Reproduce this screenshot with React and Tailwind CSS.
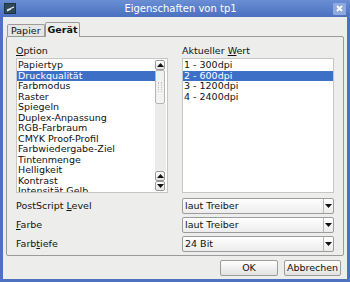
import React from 'react';

const options = [
  'Papiertyp',
  'Druckqualität',
  'Farbmodus',
  'Raster',
  'Spiegeln',
  'Duplex-Anpassung',
  'RGB-Farbraum',
  'CMYK Proof-Profil',
  'Farbwiedergabe-Ziel',
  'Tintenmenge',
  'Helligkeit',
  'Kontrast',
  'Intensität Gelb',
];

const values = ['1 - 300dpi', '2 - 600dpi', '3 - 1200dpi', '4 - 2400dpi'];

function Arrow({ up }) {
  return (
    <svg width="7" height="4" viewBox="0 0 7 4">
      <path d={up ? 'M0 4 L3.5 0 L7 4 Z' : 'M0 0 L3.5 4 L7 0 Z'} fill="#111" />
    </svg>
  );
}

function ScrollBtn({ up }) {
  return (
    <div className="h-[10px] w-[10px] flex items-center justify-center border border-[#9a9a9a] rounded-[2px] bg-gradient-to-b from-white to-[#e4e4e4]">
      <Arrow up={up} />
    </div>
  );
}

function Row({ text, selected }) {
  return (
    <div
      className={`h-[10.5px] leading-[10.5px] pl-[1px] whitespace-nowrap ${
        selected ? 'bg-[#3d6fc7] text-white' : 'text-[#111]'
      }`}
    >
      {text}
    </div>
  );
}

function Select({ value }) {
  return (
    <div className="h-[16px] w-[152px] flex border border-[#9c9c9c] rounded-[2px] bg-gradient-to-b from-white to-[#ececec]">
      <div className="flex-1 pl-[2px] leading-[14px] text-[#111]">{value}</div>
      <div className="w-[10px] border-l border-[#b8b8b8] flex items-center justify-center">
        <Arrow />
      </div>
    </div>
  );
}

function Label({ children }) {
  return <div className="h-[16px] leading-[16px] text-[#111]">{children}</div>;
}

export default function App() {
  return (
    <div
      className="w-[350px] h-[282px] bg-[#4c72c0] flex flex-col text-[9.5px] overflow-hidden"
      style={{ fontFamily: '"DejaVu Sans", sans-serif' }}
    >
      {/* title bar */}
      <div className="h-[17px] flex items-center bg-gradient-to-b from-[#6a8ed4] to-[#4a70bf] relative">
        <div className="ml-[4px] w-[12px] h-[11px] bg-[#2e4a5a] border border-[#1e3340] flex items-center justify-center">
          <svg width="9" height="6" viewBox="0 0 9 6">
            <path d="M1 4 L8 1 M1 5 L5 3" stroke="#e8eef2" strokeWidth="1.2" />
          </svg>
        </div>
        <div className="flex-1 text-center text-white text-[10px] pl-[12px]">Eigenschaften von tp1</div>
        <div className="mr-[4px] w-[13px] h-[12px] bg-[#8ea9de] rounded-[1px] flex items-center justify-center">
          <svg width="7" height="7" viewBox="0 0 7 7">
            <path d="M1 1 L6 6 M6 1 L1 6" stroke="white" strokeWidth="1.8" />
          </svg>
        </div>
      </div>

      {/* body */}
      <div className="flex-1 mx-[3px] mb-[3px] bg-[#ededeb] flex flex-col">
        <div className="flex items-end h-[19px] pl-[4px] pt-[5px]">
          <div className="h-[12px] px-[3px] border border-b-0 border-[#9b9b9b] rounded-t-[2px] bg-[#e6e6e4] leading-[11px] text-[#111]">
            Papier
          </div>
          <div className="h-[15px] px-[2px] border border-b-0 border-[#9b9b9b] rounded-t-[2px] bg-[#ededeb] leading-[14px] font-bold text-[#111] -mb-[1px] relative">
            Gerät
          </div>
        </div>

        <div className="mx-[3px] h-[220px] border border-[#9b9b9b] rounded-[2px] px-[9px] pt-[8px]">
          <div className="flex gap-[14px]">
            <div className="w-[152px]">
              <div className="h-[13px] leading-[12px] text-[#111]">
                <span className="underline">O</span>ption
              </div>
              <div className="h-[135px] bg-white border border-[#c6c6c6] flex">
                <div className="flex-1 overflow-hidden pt-[1px]">
                  {options.map((o, i) => (
                    <Row key={o} text={o} selected={i === 1} />
                  ))}
                </div>
                <div className="w-[12px] py-[1px] pr-[1px] flex flex-col">
                  <ScrollBtn up />
                  <div className="h-[34px] w-[10px] border border-[#b5b5b5] rounded-[2px] bg-[#f2f2f2] flex items-center justify-center">
                    <div className="w-[4px] h-[10px] border-l border-r border-dotted border-[#c0c0c0]" />
                  </div>
                  <div className="flex-1 bg-[#ebebeb]" />
                  <ScrollBtn up />
                  <ScrollBtn />
                </div>
              </div>
            </div>
            <div className="w-[152px]">
              <div className="h-[13px] leading-[12px] text-[#111]">
                Aktueller <span className="underline">W</span>ert
              </div>
              <div className="h-[135px] bg-white border border-[#c6c6c6] pt-[1px]">
                {values.map((v, i) => (
                  <Row key={v} text={v} selected={i === 1} />
                ))}
              </div>
            </div>
          </div>

          <div className="mt-[5px] flex flex-col gap-[3px]">
            {[
              [<>PostScript <span className="underline">L</span>evel</>, 'laut Treiber'],
              [<><span className="underline">F</span>arbe</>, 'laut Treiber'],
              [<>Farb<span className="underline">t</span>iefe</>, '24 Bit'],
            ].map(([label, val], i) => (
              <div key={i} className="flex gap-[14px]">
                <div className="w-[152px]">
                  <Label>{label}</Label>
                </div>
                <Select value={val} />
              </div>
            ))}
          </div>
        </div>

        <div className="flex justify-end gap-[6px] pr-[6px] pt-[4px]">
          <div className="w-[58px] h-[16px] border border-[#9c9c9c] rounded-[2px] bg-gradient-to-b from-white to-[#e2e2e2] text-center leading-[14px] text-[#111]">
            OK
          </div>
          <div className="w-[57px] h-[16px] border border-[#9c9c9c] rounded-[2px] bg-gradient-to-b from-white to-[#e2e2e2] text-center leading-[14px] text-[#111]">
            Abbrechen
          </div>
        </div>
      </div>
    </div>
  );
}
